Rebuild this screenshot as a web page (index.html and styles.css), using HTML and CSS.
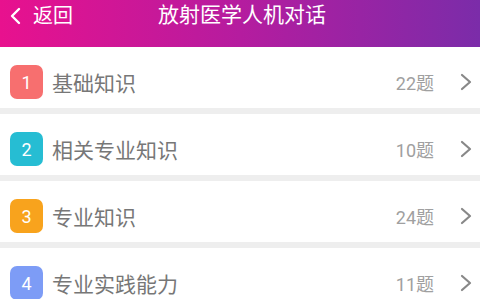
FILE: index.html
```html
<!DOCTYPE html>
<html>
    <head>
        <title>放射医学人机对话</title>
        <link rel="stylesheet" href="styles.css">
    </head>
    <body>
        <div class="top-bar">
            <div class="back">
                <svg class="back-icon" width="12" height="18" viewBox="0 0 12 18">
                    <path d="M10 2 L3 9 L10 16" fill="none" stroke="#fff" stroke-width="2.4" stroke-linecap="round" stroke-linejoin="round"/>
                </svg>
                <span>返回</span>
            </div>
            <p class="title">放射医学人机对话</p>
        </div>

        <div class="list">
            <div class="row">
                <span class="num num-red">1</span>
                <span class="name">基础知识</span>
                <span class="count">22题</span>
                <svg class="arrow" width="12" height="18" viewBox="0 0 12 18">
                    <path d="M2 2 L10 9 L2 16" fill="none" stroke="#888" stroke-width="2.2" stroke-linecap="round" stroke-linejoin="round"/>
                </svg>
            </div>
            <div class="row">
                <span class="num num-teal">2</span>
                <span class="name">相关专业知识</span>
                <span class="count">10题</span>
                <svg class="arrow" width="12" height="18" viewBox="0 0 12 18">
                    <path d="M2 2 L10 9 L2 16" fill="none" stroke="#888" stroke-width="2.2" stroke-linecap="round" stroke-linejoin="round"/>
                </svg>
            </div>
            <div class="row">
                <span class="num num-orange">3</span>
                <span class="name">专业知识</span>
                <span class="count">24题</span>
                <svg class="arrow" width="12" height="18" viewBox="0 0 12 18">
                    <path d="M2 2 L10 9 L2 16" fill="none" stroke="#888" stroke-width="2.2" stroke-linecap="round" stroke-linejoin="round"/>
                </svg>
            </div>
            <div class="row">
                <span class="num num-blue">4</span>
                <span class="name">专业实践能力</span>
                <span class="count">11题</span>
                <svg class="arrow" width="12" height="18" viewBox="0 0 12 18">
                    <path d="M2 2 L10 9 L2 16" fill="none" stroke="#888" stroke-width="2.2" stroke-linecap="round" stroke-linejoin="round"/>
                </svg>
            </div>
        </div>
    </body>
</html>
```

FILE: styles.css
```css
body{
    margin: 0;
    background-color: #eeeeee;
    font-family: Roboto, "Noto Sans CJK SC", sans-serif;
}
.top-bar{
    height: 47px;
    background: linear-gradient(90deg, #e8118e, #b51c9f 50%, #7b2ca9);
    position: relative;
    display: flex;
    justify-content: center;
}
.back{
    position: absolute;
    left: 9px;
    top: 3px;
    display: flex;
    align-items: center;
    color: white;
    font-size: 20px;
    line-height: 26px;
}
.back-icon{
    margin-right: 12px;
}
.title{
    margin: 0;
    margin-top: 1px;
    padding-left: 4px;
    color: white;
    font-size: 21px;
    line-height: 28px;
}
.list{
    display: flex;
    flex-direction: column;
    gap: 6px;
}
.row{
    height: 61px;
    box-sizing: border-box;
    padding: 9px 8px 0 10px;
    background-color: white;
    display: flex;
    align-items: center;
}
.num{
    width: 33px;
    height: 34px;
    border-radius: 7px;
    color: white;
    font-size: 18px;
    display: flex;
    align-items: center;
    justify-content: center;
    margin-right: 9px;
}
.num-red{
    background-color: #f76f6f;
}
.num-teal{
    background-color: #26bdd3;
}
.num-orange{
    background-color: #f8a31d;
}
.num-blue{
    background-color: #7d9cf6;
}
.name{
    flex: 1;
    color: #777777;
    font-size: 21px;
}
.count{
    color: #a0a0a0;
    font-size: 18px;
    margin-right: 26px;
}
.arrow{
    display: block;
}
```
